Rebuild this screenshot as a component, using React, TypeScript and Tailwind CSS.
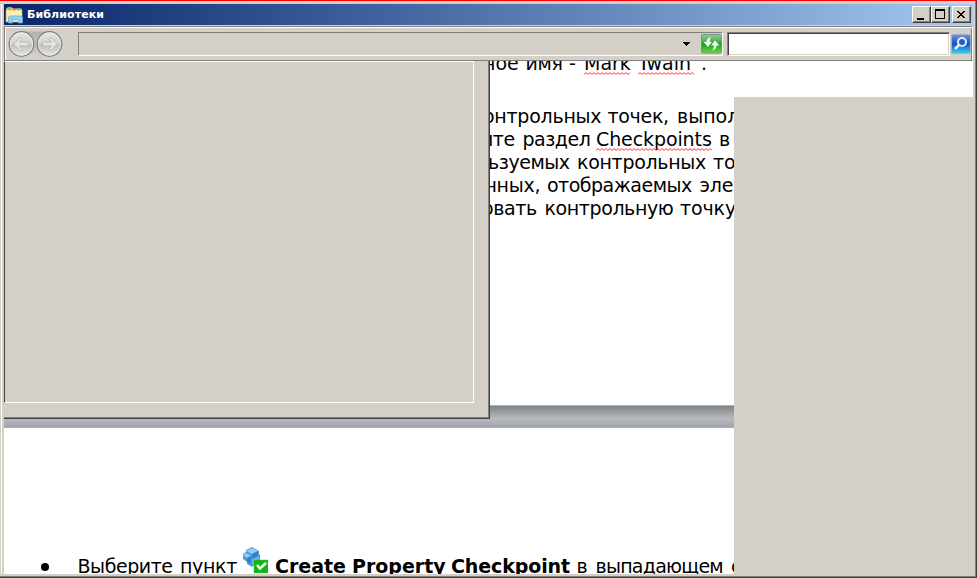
import React from "react";

type Word = { t: string; x: number; s?: number; b?: boolean; u?: number };

// Each word starts at its own tab position and fills up to the next one.
function Line({ words, start }: { words: Word[]; start: number }) {
  return (
    <div className="flex h-[23px] whitespace-pre text-[19px] leading-[23px]" style={{ paddingLeft: words[0].x - start }}>
      {words.map((w, i) => (
        <span
          key={i}
          className={w.b ? "block shrink-0 font-bold" : "block shrink-0"}
          style={{ width: (words[i + 1]?.x ?? w.x + 80) - w.x, letterSpacing: w.s ?? 0 }}
        >
          {w.t}
          {w.u ? <Squiggle width={w.u} /> : null}
        </span>
      ))}
    </div>
  );
}

function Squiggle({ width }: { width: number }) {
  let d = "M0 2.5";
  for (let x = 2; x <= width; x += 2) d += ` L${x} ${x % 4 ? 0.5 : 2.5}`;
  return (
    <svg className="-mt-[3px] block" width={width} height="3" viewBox={`0 0 ${width} 3`}>
      <path d={d} fill="none" stroke="#ff2020" strokeWidth="0.95" />
    </svg>
  );
}

function FolderIcon() {
  return (
    <svg className="block" width="20" height="18" viewBox="0 0 20 18">
      <path d="M1 3L2 1.5h5l1 1h8l1 1V15H1z" fill="#e3c56b" />
      <path d="M3 1h3v3H3z" fill="#7cc862" />
      <path d="M8 2h3v2H8z" fill="#d9634a" />
      <path d="M12 2h3v2h-3z" fill="#4aa3df" />
      <path d="M1 4h16v12H1z" fill="#f6e7a4" stroke="#d8ba62" strokeWidth=".6" />
      <path d="M2 6h14M2 8h14" stroke="#fff7cf" />
      <path d="M3.500 17v-5q0-2 2-2h10q2 0 2 2v5h-4v-3.500h-6V17z" fill="#8ed1f2" stroke="#62add8" strokeWidth=".7" />
    </svg>
  );
}

function NavButtons() {
  return (
    <svg className="block" width="56" height="28" viewBox="0 0 56 28">
      <defs>
        <linearGradient id="disc" x2="0" y2="1">
          <stop stopColor="#e6e6e4" />
          <stop offset=".48" stopColor="#d2d2cf" />
          <stop offset=".52" stopColor="#bfbfbc" />
          <stop offset="1" stopColor="#e6e6e3" />
        </linearGradient>
        <linearGradient id="bridge" x2="0" y2="1">
          <stop stopColor="#b5b2ac" />
          <stop offset="1" stopColor="#d0ccc4" />
        </linearGradient>
      </defs>
      <path d="M14 1.500h28v25l-14-3.500-14 3.500z" fill="url(#bridge)" />
      {[14.5, 42.5].map((x) => (
        <g key={x}>
          <circle cx={x} cy="14" r="12.300" fill="url(#disc)" stroke="#7c8083" strokeWidth="1.200" />
          <circle cx={x} cy="14" r="11.100" fill="none" stroke="#efefed" strokeWidth=".8" />
        </g>
      ))}
      <path d="M6.500 14l7-7 2 2-3 3h9v4h-9l3 3-2 2z" fill="#e3e3e0" stroke="#b1b0ad" strokeWidth=".8" />
      <path d="M50.500 14l-7-7-2 2 3 3h-9v4h9l-3 3 2 2z" fill="#e3e3e0" stroke="#b1b0ad" strokeWidth=".8" />
    </svg>
  );
}

function RefreshIcon() {
  return (
    <svg className="block" width="21" height="20" viewBox="0 0 21 20">
      <defs>
        <linearGradient id="green" x2="0" y2="1">
          <stop stopColor="#8fcf90" />
          <stop offset=".45" stopColor="#3fa945" />
          <stop offset=".5" stopColor="#149c1c" />
          <stop offset="1" stopColor="#6bdc3c" />
        </linearGradient>
      </defs>
      <rect x=".5" y=".5" width="20" height="18.500" rx="1" fill="url(#green)" stroke="#76957a" />
      <path d="M10 3Q5.500 4 5.500 8H2.500l4.500 5 4-5H8.500q0-3 1.500-5zM11 16.500q4.500-1 4.500-5h3l-4.500-5-4 5h3q0 3-2 5z" fill="#f1faf1" />
    </svg>
  );
}

function SearchIcon() {
  return (
    <svg className="block" width="20" height="20" viewBox="0 0 20 20">
      <defs>
        <linearGradient id="blue" x2="0" y2="1">
          <stop stopColor="#7195e0" />
          <stop offset=".5" stopColor="#1b50bd" />
          <stop offset=".6" stopColor="#1870d1" />
          <stop offset="1" stopColor="#36d4f2" />
        </linearGradient>
      </defs>
      <rect x=".5" y=".5" width="19" height="19" rx="1.500" fill="url(#blue)" stroke="#9fb0c8" />
      <path d="M8 11l-4 4" stroke="#dcecff" strokeWidth="2.600" />
      <circle cx="11" cy="8" r="4" fill="#2b5bb8" stroke="#e6effc" strokeWidth="2" />
    </svg>
  );
}

function CheckpointIcon() {
  return (
    <svg className="block" width="26" height="28" viewBox="0 0 26 28">
      <path d="M1 7l3-2V3l6-3 7 4v3l1 1v6l-5 3-3 3-5-3v-2l-4-3z" fill="#4c9de0" />
      <path d="M4 4l6-3 6 3-6 3zM1 8l3-2 5 3-4 2z" fill="#93cdf3" />
      <path d="M10 7l6-3v5l-6 3zM5 11l4-2v8l-4-2z" fill="#2f7fc9" />
      <path d="M10 12l7-3v6l-7 3z" fill="#67b1e8" />
      <path d="M12 13h14v13H12z" fill="#14b414" stroke="#45b945" strokeWidth=".5" />
      <path d="M15 18l3 3.500 6-5.500" fill="none" stroke="#fff" strokeWidth="2.600" />
    </svg>
  );
}

function CaptionButton({ d }: { d: string }) {
  return (
    <div className="h-[17px] w-[19px] border border-t-white border-r-[#404040] border-b-[#404040] border-l-white bg-[#d4d0c8] shadow-[inset_-1px_-1px_#808080]">
      <svg className="block" width="17" height="15" viewBox="0 0 17 15" shapeRendering="crispEdges">
        <path d={d} fill="#000" fillRule="evenodd" />
      </svg>
    </div>
  );
}

export default function App() {
  return (
    <div className="relative flex h-[578px] w-[977px] flex-col overflow-hidden border-t border-t-[#ff0000] bg-[#d4d0c8] font-['DejaVu_Sans',Verdana,sans-serif] text-black">
      <div className="flex min-h-0 grow flex-col border-r border-b border-[#404040]">
        <div className="flex min-h-0 grow flex-col border-r border-b border-[#808080] pt-[3px] pr-[2px] pb-[2px] pl-[1px]">
          <div className="flex min-h-0 grow flex-col border-l border-white pl-[2px]">
            <header className="flex h-[21px] w-[969px] shrink-0 items-center bg-gradient-to-r from-[#0a246a] to-[#a6caf0] pr-[2px] pl-px">
              <FolderIcon />
              <h1 className="ml-[2px] w-[100px] font-['DejaVu_Sans',sans-serif] text-[11px] leading-[20px] font-bold tracking-[0.1px] whitespace-nowrap text-white">Библиотеки</h1>
              <div className="ml-auto flex">
                <CaptionButton d="M4 11h7v2H4z" />
                <CaptionButton d="M3 2h10v10H3zM4 4v7h8V4z" />
                <div className="w-[2px]" />
                <CaptionButton d="M4 4h2v1H4zM10 4h2v1h-2zM5 5h2v1H5zM9 5h2v1H9zM6 6h4v1H6zM7 7h2v1H7zM6 8h4v1H6zM5 9h2v1H5zM9 9h2v1H9zM4 10h2v1H4zM10 10h2v1h-2z" />
              </div>
            </header>
            <div className="mt-px flex h-[35px] w-[969px] shrink-0 border border-[#808080] border-r-white shadow-[inset_1px_1px_white,inset_-1px_0_#808080]">
              <div className="flex w-full items-center pl-[2px]">
                <NavButtons />
                <div className="ml-[15px] flex h-[24px] w-[645px] items-center border border-[#808080] border-r-white border-b-white">
                  <svg className="ml-[604px] block" width="8" height="4" shapeRendering="crispEdges"><path d="M0 0h7v1H6v1H5v1H4v1H3V3H2V2H1V1H0z" /></svg>
                  <div className="ml-[10px]"><RefreshIcon /></div>
                </div>
                <div className="ml-[4px] h-[24px] w-[223px] border border-t-[#808080] border-r-white border-b-white border-l-[#808080] bg-white shadow-[inset_1px_1px_#404040,inset_-1px_-1px_#d4d0c8]" />
                <div className="ml-px"><SearchIcon /></div>
              </div>
            </div>
            <main className="relative flex min-h-0 w-[969px] grow overflow-hidden bg-white">
              <div className="flex w-[730px] shrink-0 flex-col overflow-hidden">
                <section className="h-[344px] shrink-0 overflow-hidden">
                  <div className="-mt-[9px] pl-[471px]">
                    <Line start={475} words={[{ t: "ное", x: 483 }, { t: "имя", x: 525.5, s: -0.3 }, { t: "-", x: 569 }, { t: "Mark", x: 584, u: 46 }, { t: "Twain", x: 638, u: 57 }, { t: ".", x: 701 }]} />
                    <div className="h-[30px]" />
                    <Line start={475} words={[{ t: "онтрольных", x: 483, s: -0.25 }, { t: "точек,", x: 607.5, s: -0.3 }, { t: "выпол", x: 677 }]} />
                    <Line start={475} words={[{ t: "ите", x: 481, s: -0.5 }, { t: "раздел", x: 522.5, s: -0.5 }, { t: "Checkpoints", x: 596, s: -0.1, u: 116 }, { t: "в", x: 719 }]} />
                    <Line start={475} words={[{ t: "ьзуемых", x: 488, s: -0.45 }, { t: "контрольных", x: 577, s: -0.3 }, { t: "точ", x: 713 }]} />
                    <Line start={475} words={[{ t: "нных,", x: 484.5, s: -0.3 }, { t: "отображаемых", x: 547, s: -0.5 }, { t: "элем", x: 699.5, s: -0.2 }]} />
                    <Line start={475} words={[{ t: "овать", x: 482, s: -0.4 }, { t: "контрольную", x: 544.5, s: -0.4 }, { t: "точку", x: 680, s: -0.1 }]} />
                  </div>
                </section>
                <div className="h-[23px] shrink-0 border-y border-[#a9afba] bg-gradient-to-b from-[#7f8486] via-[#b7bbc0] via-60% to-[#a0a3ac]" />
                <section className="flex h-[146px] shrink-0 items-end overflow-hidden">
                  <div className="flex h-[27px] w-full">
                    <div className="mt-[16px] ml-[37px] size-[8px] shrink-0 rounded-full bg-black" />
                    <div className="mt-[8px] w-[193px] shrink-0"><Line start={49} words={[{ t: "Выберите", x: 77.5, s: -0.45 }, { t: "пункт", x: 180, s: -0.35 }]} /></div>
                    <div className="w-[26px] shrink-0"><CheckpointIcon /></div>
                    <div className="mt-[8px] shrink-0"><Line start={268} words={[{ t: "Create", x: 275, b: true }, { t: "Property", x: 352, b: true }, { t: "Checkpoint", x: 451, b: true, s: -0.1 }, { t: "в", x: 576.5 }, { t: "выпадающем", x: 595.5, s: -0.75 }, { t: "с", x: 731 }]} /></div>
                  </div>
                </section>
              </div>
              <aside className="mt-[36px] w-[239px] shrink-0 bg-[#d4d0c8]" />
              <div className="absolute top-0 left-0 flex h-[358px] w-[486px] flex-col border-r border-b border-[#404040] bg-[#d4d0c8] shadow-[inset_-1px_-1px_#808080]">
                <div className="h-[342px] w-[470px] border border-white border-l-[#404040]" />
              </div>
            </main>
          </div>
        </div>
      </div>
    </div>
  );
}
